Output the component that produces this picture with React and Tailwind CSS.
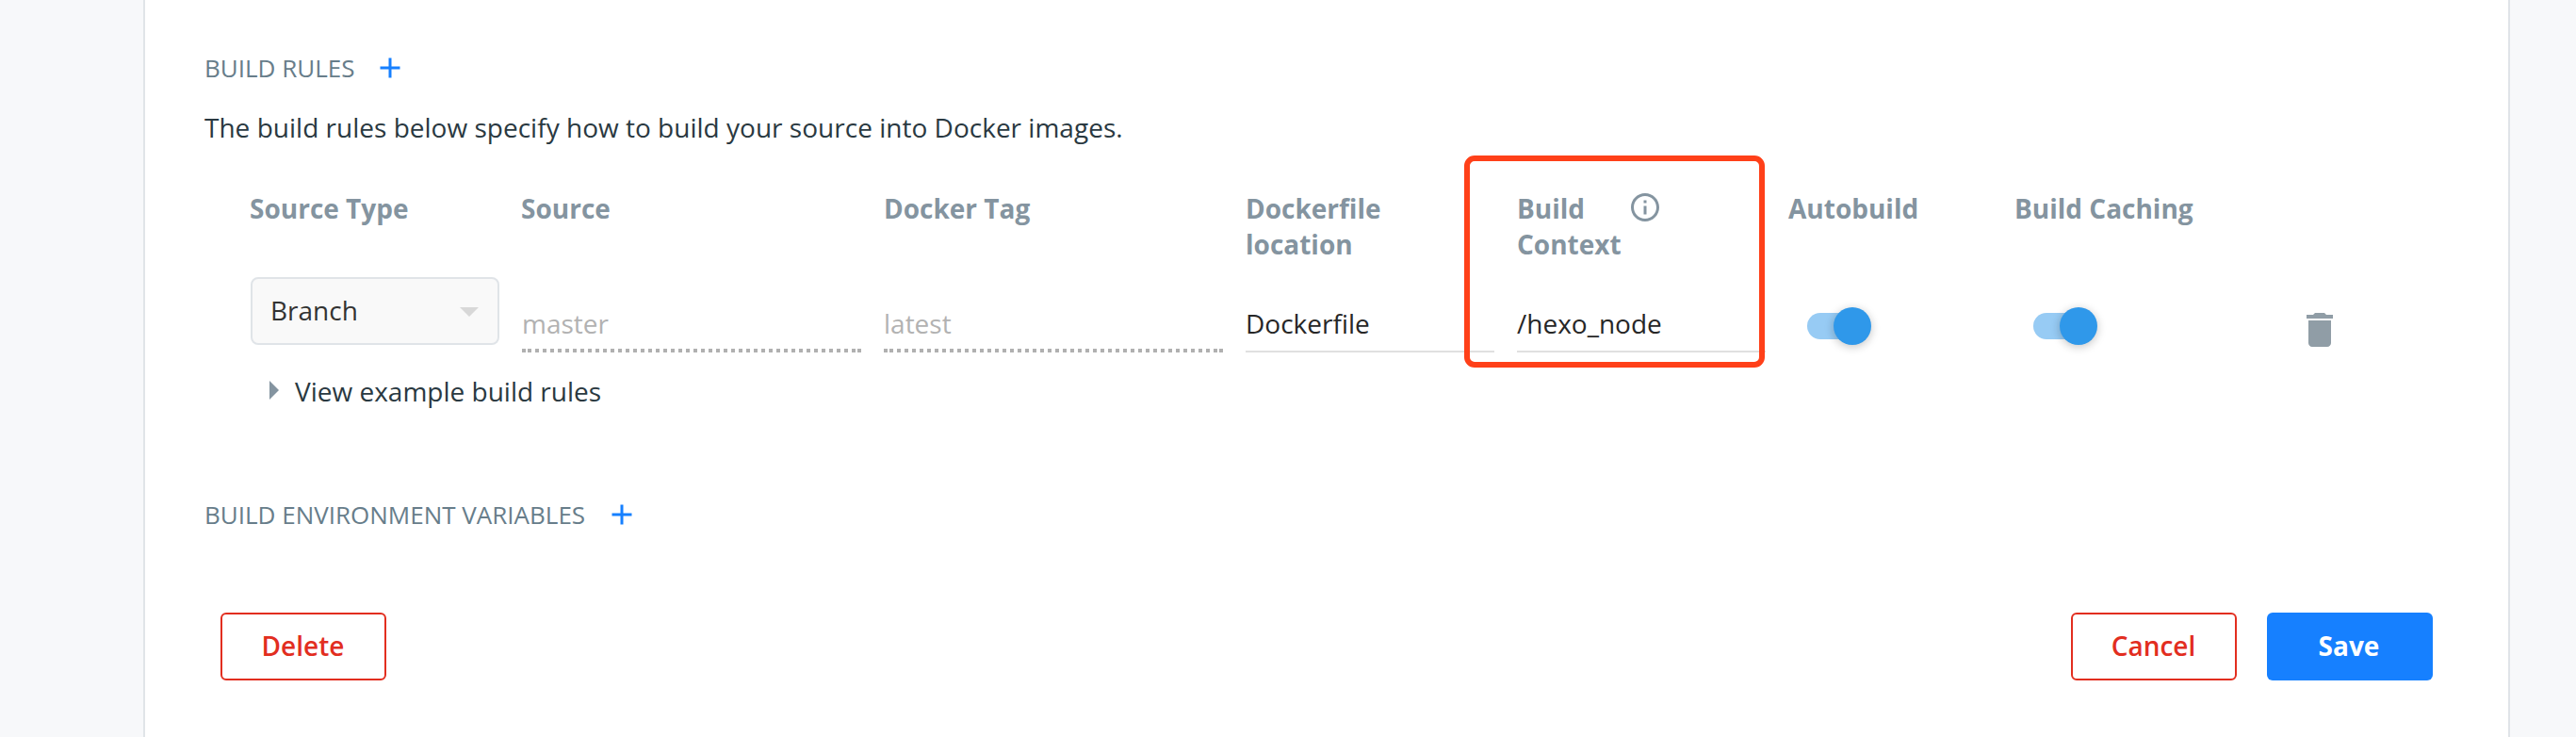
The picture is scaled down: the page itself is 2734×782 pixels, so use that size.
const HEADERS = "text-[28px] leading-[38px] font-bold text-[#8494a0]";

function PlusIcon() {
  return (
    <svg className="size-9" viewBox="0 0 24 24" fill="#1680ff">
      <path d="M19 13h-6v6h-2v-6H5v-2h6V5h2v6h6v2z" />
    </svg>
  );
}

function InfoIcon() {
  return (
    <svg className="size-9 shrink-0" viewBox="0 0 24 24" fill="#8494a0">
      <path d="M11 17h2v-6h-2v6zm1-15C6.48 2 2 6.48 2 12s4.48 10 10 10 10-4.48 10-10S17.52 2 12 2zm0 18c-4.41 0-8-3.59-8-8s3.59-8 8-8 8 3.59 8 8-3.59 8-8 8zM11 9h2V7h-2v2z" />
    </svg>
  );
}

function TrashIcon() {
  return (
    <svg className="size-12" viewBox="0 0 24 24" fill="#909da6">
      <path d="M6 19c0 1.1.9 2 2 2h8c1.100 0 2-.9 2-2V7H6v12zM19 4h-3.500l-1-1h-5l-1 1H5v2h14V4z" />
    </svg>
  );
}

function DottedField({ placeholder }) {
  return (
    <div className="flex h-20 w-[360px] flex-col pt-[30px]">
      <span className="h-[46px] text-[28px] leading-[38px] text-[#b2b2b2]">{placeholder}</span>
      <div className="flex h-1 gap-0.5">
        <span className="w-1 bg-[#b0b0b0]" />
        <span className="w-[348px] bg-[repeating-linear-gradient(90deg,#b0b0b0_0_4px,transparent_4px_8px)]" />
        <span className="w-1 bg-[#b0b0b0]" />
      </div>
    </div>
  );
}

function Field({ value }) {
  return (
    <div className="h-20 w-[264px] border-b-2 border-[#e0e0e0] pt-[30px] text-[28px] leading-[38px] text-[#272727]">
      {value}
    </div>
  );
}

function Toggle() {
  return (
    <div className="ml-5 mt-8 flex h-10 w-[68px] items-center">
      <span className="h-7 w-12 rounded-l-full bg-[#97cbf4]" />
      <span className="-ml-5 size-10 shrink-0 rounded-full bg-[#2f98ea] shadow-[0_2px_12px_rgba(0,0,0,0.12),0_2px_8px_rgba(0,0,0,0.12)]" />
    </div>
  );
}

export default function App() {
  return (
    <div className="flex h-[782px] w-[2734px] bg-[#f7f8fa] pl-[152px] font-['Open_Sans','Noto_Sans',sans-serif]">
      <main className="flex w-[2512px] flex-col border-x-2 border-[#e0e4e8] bg-white pt-[54px] pl-[63px]">
        <div className="flex h-9 items-center text-[26px] leading-9 text-[#677d8a]">
          <h2 className="w-[179px]">BUILD RULES</h2>
          <PlusIcon />
        </div>
        <p className="mt-[26px] text-[28px] leading-[38px] tracking-[0.012px] text-[#2a3941]">
          The build rules below specify how to build your source into Docker images.
        </p>

        <section className="relative mt-12 ml-[49px] grid h-[172px] grid-cols-[264px_360px_360px_264px_264px_216px_276px_72px] grid-rows-[92px_80px] gap-x-6">
          <div className={HEADERS}>
            <span className="-ml-px">Source Type</span>
          </div>
          <div className={HEADERS}>
            <span className="-ml-px">Source</span>
          </div>
          <div className={HEADERS}>Docker Tag</div>
          <div className={HEADERS}>
            Dockerfile
            <br />
            location
          </div>
          <div className={`flex items-start ${HEADERS}`}>
            <span className="w-[118px]">
              Build
              <br />
              Context
            </span>
            <InfoIcon />
          </div>
          <div className={HEADERS}>Autobuild</div>
          <div className={HEADERS}>Build Caching</div>
          <div />

          <div className="flex h-[72px] items-start justify-between rounded-lg border-2 border-[#e0e4e8] bg-[#f9f9f9] pt-[14px] pr-5 pl-[19px]">
            <span className="text-[28px] leading-[38px] text-[#333333]">Branch</span>
            <svg className="mt-4 h-2.5 w-5" viewBox="0 0 20 10" fill="#d8d8d8">
              <path d="M0 0h20L10 10z" />
            </svg>
          </div>
          <DottedField placeholder="master" />
          <DottedField placeholder="latest" />
          <Field value="Dockerfile" />
          <Field value="/hexo_node" />
          <Toggle />
          <Toggle />
          <div className="mt-8">
            <TrashIcon />
          </div>

          <div className="absolute top-[-37px] left-[1288px] h-[225px] w-[319px] rounded-[11px] border-[6px] border-[#ff4019]" />
        </section>

        <div className="mt-[22px] ml-[69px] flex h-[38px] items-start gap-[17px]">
          <svg className="mt-2 h-5 w-2.5" viewBox="0 0 10 20" fill="#8494a0">
            <path d="M0 0v20L10 10z" />
          </svg>
          <span className="text-[28px] leading-[38px] text-[#2a3941]">View example build rules</span>
        </div>

        <div className="mt-[94px] flex h-9 items-center text-[26px] leading-9 text-[#677d8a]">
          <h2 className="w-[425px]">BUILD ENVIRONMENT VARIABLES</h2>
          <PlusIcon />
        </div>

        <div className="mt-[86px] flex h-[72px] pl-[17px] text-[28px] font-semibold">
          <button className="w-44 rounded-[6px] border-2 border-[#e22e1f] pr-px pb-0.5 text-[#e22e1f]">Delete</button>
          <button className="ml-[1788px] w-44 rounded-[6px] border-2 border-[#e22e1f] pr-px pb-0.5 text-[#e22e1f]">
            Cancel
          </button>
          <button className="ml-8 w-44 rounded-[6px] bg-[#1680ff] pr-0.5 pb-0.5 font-bold text-white">Save</button>
        </div>
      </main>
    </div>
  );
}
